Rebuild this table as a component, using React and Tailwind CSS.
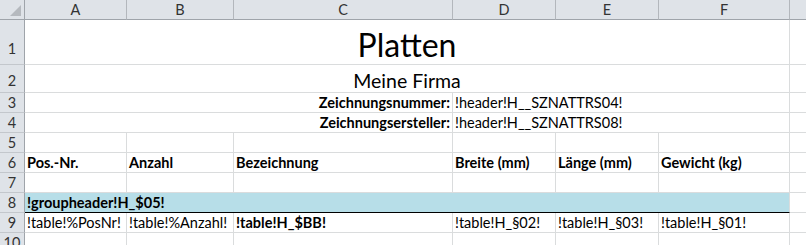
const FONT = "font-['Lato','Noto_Sans',sans-serif]"

// column header: letter + width class (width includes the right grid line)
const COLUMNS = [
  { key: 'A', w: 'w-[102px]' },
  { key: 'B', w: 'w-[107px]' },
  { key: 'C', w: 'w-[219px]' },
  { key: 'D', w: 'w-[103px]' },
  { key: 'E', w: 'w-[103px]' },
  { key: 'F', w: 'w-[131px]' },
]

const plain = (text = '', extra = {}) => ({ text, ...extra })

const ROWS = [
  {
    n: 1,
    h: 'h-[45px]',
    numPad: 'pb-[8px]',
    cells: [{ w: 'w-[765px]', text: 'Platten', align: 'center', size: 'text-[32px] leading-[32px] pb-[3px]' }],
  },
  {
    n: 2,
    h: 'h-[28px]',
    numPad: 'pb-[4px]',
    cells: [{ w: 'w-[765px]', text: 'Meine Firma', align: 'center', size: 'text-[19.5px] leading-[20px] pb-[1px]' }],
  },
  {
    n: 3,
    h: 'h-[20px]',
    cells: [
      { w: 'w-[428px]', text: 'Zeichnungsnummer:', align: 'right', bold: true },
      { w: 'w-[337px]', text: '!header!H__SZNATTRS04!' },
    ],
  },
  {
    n: 4,
    h: 'h-[20px]',
    cells: [
      { w: 'w-[428px]', text: 'Zeichnungsersteller:', align: 'right', bold: true },
      { w: 'w-[337px]', text: '!header!H__SZNATTRS08!' },
    ],
  },
  { n: 5, h: 'h-[20px]', cells: COLUMNS.map((c) => plain('', { w: c.w })) },
  {
    n: 6,
    h: 'h-[20px]',
    cells: ['Pos.-Nr.', 'Anzahl', 'Bezeichnung', 'Breite (mm)', 'Länge (mm)', 'Gewicht (kg)'].map((t, i) =>
      plain(t, { w: COLUMNS[i].w, bold: true })
    ),
  },
  { n: 7, h: 'h-[20px]', cells: COLUMNS.map((c) => plain('', { w: c.w })) },
  {
    n: 8,
    h: 'h-[20px]',
    cells: [{ w: 'w-[765px]', text: '!groupheader!H_$05!', bold: true, fill: 'bg-[#b7dee8] border-b-black' }],
  },
  {
    n: 9,
    h: 'h-[20px]',
    cells: [
      plain('!table!%PosNr!', { w: COLUMNS[0].w }),
      plain('!table!%Anzahl!', { w: COLUMNS[1].w }),
      plain('!table!H_$BB!', { w: COLUMNS[2].w, bold: true }),
      plain('!table!H_§02!', { w: COLUMNS[3].w }),
      plain('!table!H_§03!', { w: COLUMNS[4].w }),
      plain('!table!H_§01!', { w: COLUMNS[5].w }),
    ],
  },
  { n: 10, h: 'h-[20px]', cells: COLUMNS.map((c) => plain('', { w: c.w })) },
]

function Cell({ cell, h }) {
  const align =
    cell.align === 'center' ? 'justify-center' : cell.align === 'right' ? 'justify-end pr-[2px]' : 'justify-start pl-[2px]'
  return (
    <div
      className={`${cell.w} ${h} shrink-0 flex items-end ${align} border-r border-b ${
        cell.fill ?? 'border-[#dadcdd]'
      } ${cell.fill ? 'border-r-[#dadcdd]' : ''} overflow-visible`}
    >
      <span
        className={`whitespace-nowrap text-black ${cell.size ?? 'text-[14.5px] leading-[18px]'} ${
          cell.bold ? 'font-bold' : ''
        }`}
      >
        {cell.text}
      </span>
    </div>
  )
}

export default function App() {
  return (
    <div className={`w-[806px] h-[245px] overflow-hidden bg-white ${FONT}`}>
      {/* column letters */}
      <div className="flex h-[20px]">
        <div className="w-[25px] shrink-0 h-full bg-[#dfe3e8] border-r border-b border-[#9fa4aa] relative">
          <svg className="absolute right-[3px] bottom-[3px]" width="11" height="11" viewBox="0 0 11 11">
            <polygon points="11,0 11,11 0,11" fill="#b5b9be" />
          </svg>
        </div>
        {COLUMNS.map((c) => (
          <div
            key={c.key}
            className={`${c.w} shrink-0 h-full bg-[#dfe3e8] border-r border-r-[#b3b7bc] border-b border-b-[#9fa4aa] flex items-center justify-center text-[14.5px] text-[#333]`}
          >
            {c.key}
          </div>
        ))}
        <div className="flex-1 h-full bg-[#dfe3e8] border-b border-[#9fa4aa]" />
      </div>

      {ROWS.map((row) => (
        <div key={row.n} className="flex">
          <div
            className={`w-[25px] shrink-0 ${row.h} bg-[#dfe3e8] border-r border-r-[#9fa4aa] border-b border-b-[#c3c7cc] flex items-end justify-center ${
              row.numPad ?? 'pb-[2px]'
            } text-[14.5px] leading-[14px] text-[#333]`}
          >
            {row.n}
          </div>
          {row.cells.map((cell, i) => (
            <Cell key={i} cell={cell} h={row.h} />
          ))}
          <div className={`flex-1 ${row.h} border-b border-[#dadcdd]`} />
        </div>
      ))}
    </div>
  )
}
